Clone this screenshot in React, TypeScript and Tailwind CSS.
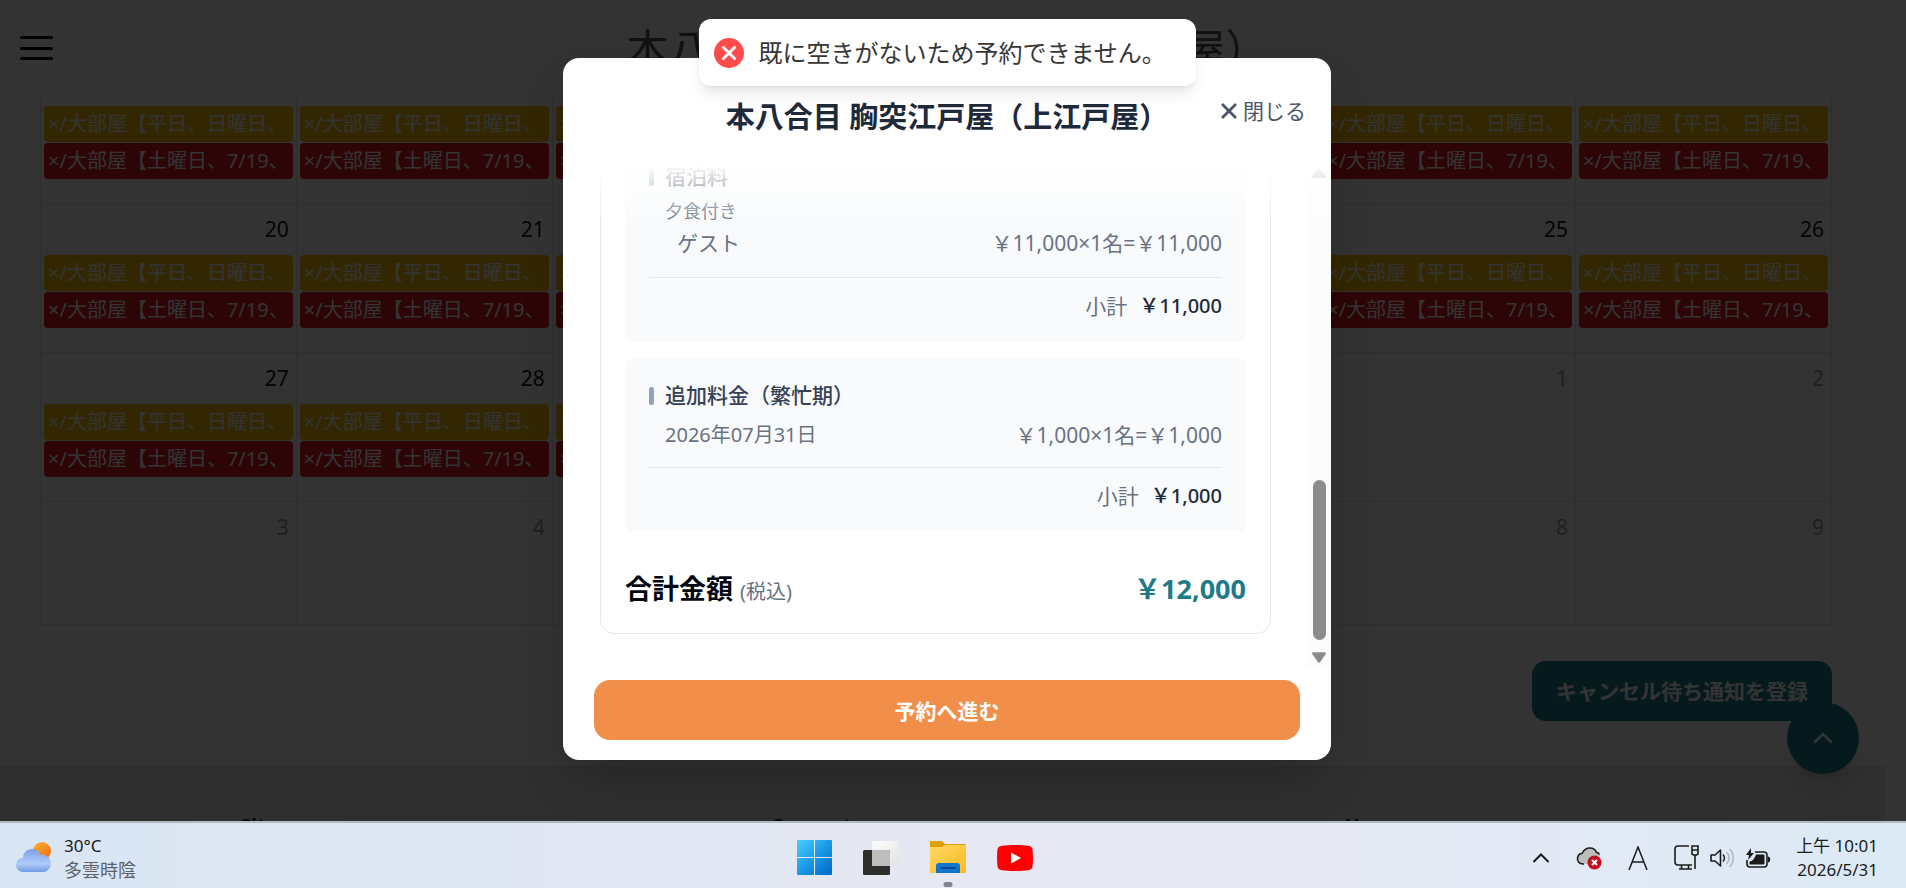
import { ReactNode } from 'react'

type Day = { label: string; muted?: boolean; events?: boolean }

const weeks: Day[][] = [
  ['20', '21', '22', '23', '24', '25', '26'].map((label) => ({
    label,
    events: true,
  })),
  [
    ...['27', '28', '29', '30', '31'].map((label) => ({ label, events: true })),
    { label: '1', muted: true },
    { label: '2', muted: true },
  ],
  ['3', '4', '5', '6', '7', '8', '9'].map((label) => ({ label, muted: true })),
]

function DayEvents() {
  return (
    <div className="flex flex-col gap-px text-xl leading-9 text-white">
      <a
        href="#weekday"
        className="h-9 overflow-hidden rounded-sm bg-[#ffc107] pl-1 whitespace-nowrap"
      >
        ×/大部屋【平日、日曜日、
      </a>
      <a
        href="#saturday"
        className="h-9 overflow-hidden rounded-sm bg-[#de1a1f] pl-1 whitespace-nowrap"
      >
        ×/大部屋【土曜日、7/19、
      </a>
    </div>
  )
}

function Calendar() {
  return (
    <table className="w-full table-fixed border-collapse border-x border-b border-gray-200">
      <tbody>
        <tr className="h-[106px] align-top">
          {weeks[0].map((day) => (
            <td
              key={day.label}
              className="border-x border-b border-gray-200 px-[3px] pt-[9px]"
            >
              <DayEvents />
            </td>
          ))}
        </tr>
        {weeks.map((week, index) => (
          <tr
            key={index}
            className={`align-top ${index === 2 ? 'h-[123px]' : 'h-[149px]'}`}
          >
            {week.map((day) => (
              <td key={day.label} className="border border-gray-200 px-[3px]">
                <div
                  className={`pt-[7px] pr-1 pb-2 text-right text-[21px] leading-9 ${
                    day.muted ? 'text-gray-400' : 'text-gray-900'
                  }`}
                >
                  {day.label}
                </div>
                {day.events && <DayEvents />}
              </td>
            ))}
          </tr>
        ))}
      </tbody>
    </table>
  )
}

function BookingPage() {
  return (
    <div className="flex h-full flex-col bg-white">
      <header className="relative flex h-[97px] shrink-0 items-center justify-center pr-3 shadow-xs">
        <button
          aria-label="メニュー"
          className="absolute top-9 left-5 flex h-6 w-[33px] flex-col justify-between"
        >
          <span className="h-[3px] rounded-full bg-black" />
          <span className="h-[3px] rounded-full bg-black" />
          <span className="h-[3px] rounded-full bg-black" />
        </button>
        <h1 className="text-[42px] whitespace-nowrap text-[#555]">
          本八合目 胸突江戸屋（上江戸屋）
        </h1>
      </header>
      <main className="px-10 pr-[74px]">
        <Calendar />
        <div className="mt-9 mb-[45px] flex justify-end">
          <button className="h-[60px] rounded-[14px] bg-[#1f7f8f] px-6 pt-0.5 text-[21px] font-bold text-white">
            キャンセル待ち通知を登録
          </button>
        </div>
      </main>
      <footer className="mr-[21px] grid flex-1 grid-cols-3 bg-[#ebebeb] pt-[46px] text-xl font-bold text-gray-900">
        <span className="pl-60">Site</span>
        <span className="pl-36">Support</span>
        <span className="pl-[88px]">Us</span>
      </footer>
      <button
        aria-label="ページ上部へ"
        className="absolute right-[47px] bottom-[47px] flex size-[72px] items-center justify-center rounded-full bg-[#1f7f8f] text-white shadow-xl"
      >
        <svg viewBox="0 0 20 12" className="w-5" fill="none">
          <path
            d="M2 10l8-8 8 8"
            stroke="currentColor"
            strokeWidth="2.6"
            strokeLinecap="round"
          />
        </svg>
      </button>
    </div>
  )
}

function FeePanel({
  title,
  subtotal,
  children,
}: {
  title: string
  subtotal: string
  children: ReactNode
}) {
  return (
    <section className="rounded-md bg-slate-50 px-6 pt-[19px] pb-[17px]">
      <h3 className="flex h-9 items-center gap-[11px] text-[21px] font-medium text-gray-700">
        <span className="h-[18px] w-[5px] rounded-sm bg-slate-400" />
        {title}
      </h3>
      {children}
      <div className="mt-3.5 flex items-center justify-end gap-3 border-t border-gray-200 pt-2.5 leading-9">
        <span className="text-[21px] text-gray-500">小計</span>
        <span className="text-xl font-medium text-gray-800">{subtotal}</span>
      </div>
    </section>
  )
}

function Scrollbar() {
  return (
    <div className="absolute inset-y-0 right-0 flex w-6 flex-col items-center bg-[#fcfcfc] pt-[9px] pb-[5px]">
      <svg viewBox="0 0 14 11" className="w-3.5" fill="#8b8b8b">
        <path d="M6 .8a1.3 1.3 0 0 1 2 0l5.6 8a1.2 1.2 0 0 1-1 2H1.4a1.2 1.2 0 0 1-1-2z" />
      </svg>
      <div className="mt-auto mb-3 h-40 w-[13px] rounded-full bg-[#8b8b8b]" />
      <svg viewBox="0 0 14 11" className="w-3.5" fill="#8b8b8b">
        <path d="M6 10.2a1.3 1.3 0 0 0 2 0l5.6-8a1.2 1.2 0 0 0-1-2H1.4a1.2 1.2 0 0 0-1 2z" />
      </svg>
    </div>
  )
}

function BookingDialog() {
  return (
    <div
      role="dialog"
      aria-labelledby="dialog-title"
      className="relative flex h-[702px] w-[768px] flex-col rounded-2xl bg-white shadow-2xl"
    >
      <div className="relative flex h-[100px] shrink-0 items-center justify-center pt-[18px]">
        <h2
          id="dialog-title"
          className="text-[29px] font-bold whitespace-nowrap text-gray-800"
        >
          本八合目 胸突江戸屋（上江戸屋）
        </h2>
        <button className="absolute top-[35px] right-[25px] flex items-center gap-1.5 text-[21px] leading-9 text-gray-600">
          <svg viewBox="0 0 16 16" className="w-4" fill="none">
            <path
              d="M1 1l14 14M15 1L1 15"
              stroke="currentColor"
              strokeWidth="2.8"
            />
          </svg>
          閉じる
        </button>
      </div>

      <div className="relative flex h-[510px] flex-col justify-end overflow-hidden pr-[60px] pb-[34px] pl-[37px]">
        <div className="shrink-0 rounded-[14px] border border-gray-200 px-6 pb-[21px]">
          <div className="flex flex-col gap-[18px]">
            <FeePanel title="宿泊料" subtotal="￥11,000">
              <p className="pl-4 text-[18px] leading-8 text-gray-500">
                夕食付き
              </p>
              <div className="flex items-center justify-between pb-1 text-[21px] leading-8 text-gray-500">
                <span className="pl-7">ゲスト</span>
                <span>￥11,000×1名=￥11,000</span>
              </div>
            </FeePanel>
            <FeePanel title="追加料金（繁忙期）" subtotal="￥1,000">
              <div className="mt-[3px] flex items-center justify-between leading-9 text-gray-500">
                <span className="pl-4 text-xl">2026年07月31日</span>
                <span className="text-[21px]">￥1,000×1名=￥1,000</span>
              </div>
            </FeePanel>
          </div>
          <div className="mt-[35px] flex items-center justify-between">
            <p className="text-[27px] leading-[46px] font-bold text-gray-950">
              合計金額{' '}
              <span className="text-xl font-normal text-gray-500">(税込)</span>
            </p>
            <p className="text-[27px] font-bold text-[#217a87]">￥12,000</p>
          </div>
        </div>
        <Scrollbar />
        <div className="absolute inset-x-0 top-0 h-[70px] bg-linear-to-b from-white from-10% to-white/0" />
      </div>

      <div className="mt-auto px-[31px] pb-5">
        <button className="h-[60px] w-full rounded-2xl bg-[#f18e49] pt-1 text-[21px] font-bold text-white">
          予約へ進む
        </button>
      </div>
    </div>
  )
}

function Toast() {
  return (
    <div
      role="alert"
      className="flex h-[67px] w-[497px] items-center gap-[15px] rounded-xl bg-white px-[15px] text-2xl whitespace-nowrap text-[#363636] shadow-lg"
    >
      <svg viewBox="0 0 30 30" className="w-[30px] shrink-0">
        <circle cx="15" cy="15" r="15" fill="#ff4b4b" />
        <path
          d="M9.5 9.5l11 11M20.5 9.5l-11 11"
          stroke="#fff"
          strokeWidth="3"
          strokeLinecap="round"
        />
      </svg>
      既に空きがないため予約できません。
    </div>
  )
}

function WeatherIcon() {
  return (
    <svg viewBox="0 0 36 37" className="w-9">
      <defs>
        <linearGradient id="sun" x1="0" y1="0" x2="1" y2="1">
          <stop offset="0" stopColor="#f8b62b" />
          <stop offset="1" stopColor="#f0661a" />
        </linearGradient>
        <linearGradient id="cloud" x1="0" y1="0" x2="0" y2="1">
          <stop offset="0" stopColor="#7ba0ea" />
          <stop offset=".65" stopColor="#b0ccf8" />
          <stop offset="1" stopColor="#6f9be6" />
        </linearGradient>
      </defs>
      <circle cx="26" cy="12" r="9" fill="url(#sun)" />
      <path
        d="M7 33a7 7 0 0 1 0-14c0-5 4-9 9-9 4 0 7 2 8.500 6A8.500 8.500 0 0 1 28 33z"
        fill="url(#cloud)"
      />
    </svg>
  )
}

function WindowsIcon() {
  return (
    <svg viewBox="0 0 35 35" className="w-[35px]">
      <defs>
        <linearGradient id="win" x1="0" y1="0" x2="1" y2="1">
          <stop offset="0" stopColor="#4cd0ff" />
          <stop offset=".5" stopColor="#1a9ae6" />
          <stop offset="1" stopColor="#0067c8" />
        </linearGradient>
      </defs>
      <path
        d="M1 0h16v17H0V1a1 1 0 0 1 1-1zM18 0h16a1 1 0 0 1 1 1v16H18zM0 18h17v17H1a1 1 0 0 1-1-1zM18 18h17v16a1 1 0 0 1-1 1H18z"
        fill="url(#win)"
      />
    </svg>
  )
}

function TaskViewIcon() {
  return (
    <svg viewBox="0 0 36 34" className="w-9">
      <defs>
        <linearGradient id="pane" x1="0" y1="0" x2="1" y2="1">
          <stop offset="0" stopColor="#fdfdfd" />
          <stop offset="1" stopColor="#e2e2e4" />
        </linearGradient>
      </defs>
      <rect y="9" width="27" height="25" rx="1.500" fill="#2d2d2b" />
      <rect x="9" width="27" height="25" rx="1.500" fill="url(#pane)" />
      <path d="M9 9h18v16H9z" fill="#bdbdbb" />
    </svg>
  )
}

function FolderIcon() {
  return (
    <svg viewBox="0 0 36 33" className="w-9">
      <defs>
        <linearGradient id="folder" x1="0" y1="0" x2="1" y2="1">
          <stop offset="0" stopColor="#ffd767" />
          <stop offset="1" stopColor="#fcbc1c" />
        </linearGradient>
      </defs>
      <path d="M0 1a1 1 0 0 1 1-1h11l3 3h20a1 1 0 0 1 1 1v8H0z" fill="#e0a000" />
      <path d="M0 6h12l3-2h21v27a1 1 0 0 1-1 1H1a1 1 0 0 1-1-1z" fill="url(#folder)" />
      <path d="M6 32v-7a3 3 0 0 1 3-3h18a3 3 0 0 1 3 3v7z" fill="#1176cc" />
      <path d="M11 27h14" stroke="#0a4b94" strokeWidth="2" strokeLinecap="round" />
    </svg>
  )
}

function YoutubeIcon() {
  return (
    <svg viewBox="0 0 36 26" className="w-9">
      <path
        d="M5 .8C12-.2 24-.2 31 .8c3 .4 4.300 1.600 4.600 4.200.5 5 .5 11 0 16-.3 2.600-1.600 3.800-4.600 4.200-7 1-19 1-26 0C2 24.800.7 23.600.4 21c-.5-5-.5-11 0-16C.7 2.400 2 1.200 5 .8z"
        fill="#f00"
      />
      <path d="M14 7.500v11l10-5.500z" fill="#fff" />
    </svg>
  )
}

function Tray() {
  return (
    <div className="flex items-center pr-7 text-[#1b1b1b]">
      <button aria-label="隠れているアイコン" className="mr-[26px]">
        <svg viewBox="0 0 18 10" className="w-[18px]" fill="none">
          <path d="M1.500 9L9 1.500 16.500 9" stroke="currentColor" strokeWidth="2" />
        </svg>
      </button>
      <svg viewBox="0 0 26 24" className="mr-[26px] w-[26px]">
        <path
          d="M6 18a5.500 5.500 0 0 1-1-10.500C7 3 10 2 13 2c4 0 6 2 7 4.500 2 0 3.500 1.500 4 3.500L14 18z"
          fill="#bdbdbd"
        />
        <path
          d="M8 18C3 18.500 1 15 1.500 12 2 9 4 7.500 6 7.500 8 3.500 11 2 14 2c3.500 0 5.500 2 6.500 4.500 1.500 0 2.500 1 3 2"
          fill="none"
          stroke="#1b1b1b"
          strokeWidth="1.600"
        />
        <circle cx="18.500" cy="16.500" r="7" fill="#c50f1f" />
        <path d="M16 14l5 5M21 14l-5 5" stroke="#fff" strokeWidth="2" />
      </svg>
      <svg viewBox="0 0 20 24" className="mr-[26px] w-5" fill="none">
        <path
          d="M1 24L10 1l9 23M4.500 16h11"
          stroke="currentColor"
          strokeWidth="1.500"
        />
      </svg>
      <svg viewBox="0 0 25 25" className="mr-[11px] w-[25px]" fill="none">
        <path
          d="M15 1H4a3 3 0 0 0-3 3v13a3 3 0 0 0 3 3h14M7.500 20v4M14.500 20v4M5 24h13M18 1h6v8l-1.500 1h-3L18 9zM18 5h6M21 10v14"
          stroke="currentColor"
          strokeWidth="1.600"
        />
      </svg>
      <svg viewBox="0 0 25 20" className="mr-[11px] w-[25px]" fill="none">
        <path
          d="M1 7v6h4l5.500 5V2L5 7zM13 6.500c1.800 2 1.800 5 0 7"
          stroke="currentColor"
          strokeWidth="1.600"
          strokeLinejoin="round"
        />
        <path
          d="M16.500 4c3.500 3.500 3.500 8.500 0 12M19.500 1c5 5 5 13 0 18"
          stroke="#b3b8c0"
          strokeWidth="1.600"
        />
      </svg>
      <svg viewBox="0 0 25 20" className="mr-[25px] w-[25px]" fill="none">
        <path
          d="M9 4h9a3 3 0 0 1 3 3v9a3 3 0 0 1-3 3H4a3 3 0 0 1-3-3v-4"
          stroke="currentColor"
          strokeWidth="1.600"
        />
        <path
          d="M10 6.500h7.500a1 1 0 0 1 1 1v8a1 1 0 0 1-1 1h-14v-3c3 0 5-3 6.500-7zM22 8.500c3 0 3 6 0 6zM5 0L0 7h3l-1 5 6-7H5z"
          fill="currentColor"
        />
      </svg>
      <div className="text-right text-[17px] leading-6 whitespace-nowrap">
        <p>上午 10:01</p>
        <p>2026/5/31</p>
      </div>
    </div>
  )
}

function Taskbar() {
  return (
    <div className="flex h-[67px] shrink-0 items-stretch border-t-2 border-[#b4bac4] bg-linear-to-r from-[#d9e6f4] via-[#e8e8f3] via-60% to-[#dceaf6] pt-1">
      <div className="flex w-[41.8%] items-center gap-3 pl-4">
        <WeatherIcon />
        <div className="leading-6">
          <p className="text-[17px] text-[#1b1b1b]">30°C</p>
          <p className="text-[18px] text-[#5c636b]">多雲時陰</p>
        </div>
      </div>
      <div className="flex items-center gap-[31px]">
        <button aria-label="スタート">
          <WindowsIcon />
        </button>
        <button aria-label="タスクビュー">
          <TaskViewIcon />
        </button>
        <button
          aria-label="エクスプローラー"
          className="relative flex h-full items-center"
        >
          <FolderIcon />
          <span className="absolute bottom-px left-1/2 h-[5px] w-[9px] -translate-x-1/2 rounded-full bg-[#80868e]" />
        </button>
        <button aria-label="YouTube">
          <YoutubeIcon />
        </button>
      </div>
      <div className="ml-auto flex">
        <Tray />
      </div>
    </div>
  )
}

export default function App() {
  return (
    <div className="flex h-screen flex-col overflow-hidden font-['Noto_Sans','Noto_Sans_CJK_JP',sans-serif]">
      <div className="relative min-h-0 flex-1 overflow-hidden">
        <BookingPage />
        <div className="absolute inset-0 flex items-start justify-center bg-black/80 pt-[58px] pr-3">
          <BookingDialog />
        </div>
        <div className="absolute inset-x-0 top-[19px] flex justify-center pr-3">
          <Toast />
        </div>
      </div>
      <Taskbar />
    </div>
  )
}
